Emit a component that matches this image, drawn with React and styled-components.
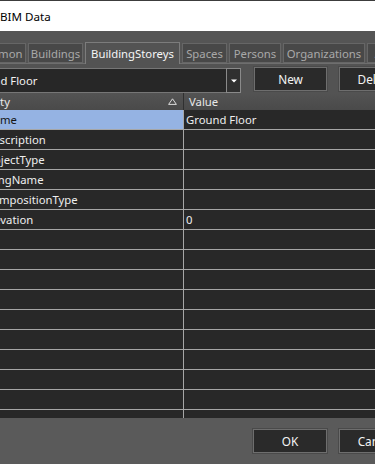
import React from 'react';
import styled, { createGlobalStyle } from 'styled-components';

const Global = createGlobalStyle`
  html, body {
    margin: 0;
    padding: 0;
    width: 375px;
    height: 464px;
    overflow: hidden;
    background: #595959;
  }
  body {
    font-family: "Noto Sans", "Open Sans", sans-serif;
    font-size: 11.3px;
  }
  #root {
    width: 375px;
    height: 464px;
    overflow: hidden;
  }
  * { box-sizing: border-box; }
`;

const Window = styled.div`
  width: 375px;
  height: 464px;
  overflow: hidden;
  display: flex;
  flex-direction: column;
`;

const TitleBar = styled.div`
  flex: none;
  height: 31px;
  border-top: 1px solid #3c3c3c;
  background: #ffffff;
  display: flex;
  align-items: center;
  padding-top: 1px;
  color: #000;
  font-size: 11.6px;
  white-space: nowrap;
`;

const Form = styled.div`
  flex: 1;
  width: 465px;
  margin-left: -40px;
  display: flex;
  flex-direction: column;
  background: #555555;
`;

const TabStrip = styled.div`
  flex: none;
  height: 21px;
  margin-top: 11px;
  padding-left: 10px;
  display: flex;
  align-items: flex-end;
  gap: 2px;
`;

const Tab = styled.div`
  flex: none;
  width: ${p => p.$w}px;
  height: ${p => (p.$active ? 22 : 20)}px;
  margin-bottom: ${p => (p.$active ? -1 : 0)}px;
  position: relative;
  z-index: ${p => (p.$active ? 1 : 0)};
  display: flex;
  align-items: center;
  justify-content: center;
  white-space: nowrap;
  background: ${p => (p.$active ? '#535353' : '#484848')};
  border: 1px solid ${p => (p.$active ? '#7c7c7c' : '#666666')};
  border-bottom: ${p => (p.$active ? 'none' : '1px solid #666666')};
  color: ${p => (p.$active ? '#f6f6f6' : '#a8a8a8')};
`;

const Page = styled.div`
  flex: none;
  background: #535353;
  border-top: 1px solid #6e6e6e;
  padding: 4px 4px 0;
  display: flex;
  flex-direction: column;
`;

const ComboRow = styled.div`
  display: flex;
  align-items: flex-start;
  gap: 12px;
  padding-right: 9px;
  height: 25px;
`;

const Combo = styled.div`
  flex: 1;
  height: 25px;
  margin-right: 1px;
  display: flex;
  background: #272727;
  border: 1px solid #767676;
  color: #f2f2f2;
`;

const ComboText = styled.div`
  flex: 1;
  display: flex;
  align-items: center;
  padding-left: 2px;
  white-space: nowrap;
`;

const DropButton = styled.div`
  flex: none;
  width: 15px;
  margin: -1px -1px -1px 0;
  border: 1px solid #8a8a8a;
  background: #303030;
  display: flex;
  align-items: center;
  justify-content: center;
`;

const Button = styled.div`
  flex: none;
  width: ${p => p.$w || 73}px;
  height: 24px;
  margin-top: ${p => p.$mt || 0}px;
  display: flex;
  align-items: center;
  justify-content: center;
  background: #2a2a2a;
  border: 1px solid #6e6e6e;
  box-shadow: 0 0 0 1px #4a4a4a;
  color: #f4f4f4;
  font-size: 11.8px;
  white-space: nowrap;
`;

const Grid = styled.div`
  height: 325px;
  overflow: hidden;
  background: #282828;
  display: grid;
  grid-template-columns: 220px 1fr;
  grid-auto-rows: 20px;
  grid-template-rows: 17px;
`;

const HeadCell = styled.div`
  display: flex;
  align-items: center;
  justify-content: space-between;
  background: linear-gradient(#535353, #4a4a4a);
  color: #e8e8e8;
  padding-left: ${p => p.$pl}px;
  padding-right: 6px;
  border-right: ${p => (p.$sep ? '1px solid #303030' : 'none')};
  white-space: nowrap;
`;

const Cell = styled.div`
  display: flex;
  align-items: center;
  padding-left: ${p => p.$pl}px;
  padding-bottom: 1px;
  border-bottom: 1px solid #a6a6a6;
  border-right: ${p => (p.$sep ? '1px solid #a6a6a6' : 'none')};
  background: ${p => (p.$selected ? '#95b3e3' : '#282828')};
  color: ${p => (p.$selected ? '#141414' : '#eeeeee')};
  white-space: nowrap;
  overflow: hidden;
`;

const BottomBar = styled.div`
  flex: 1;
  background: #5a5a5a;
  display: flex;
  justify-content: flex-end;
  align-items: flex-start;
  gap: 12px;
  padding: 11px 12px 0 0;
`;

const tabs = [
  { label: 'Common', w: 56 },
  { label: 'Buildings', w: 55 },
  { label: 'BuildingStoreys', w: 95, active: true },
  { label: 'Spaces', w: 45 },
  { label: 'Persons', w: 52 },
  { label: 'Organizations', w: 82 },
  { label: 'Addresses', w: 70 },
];

const rows = [
  { name: 'Name', value: 'Ground Floor', selected: true },
  { name: 'Description', value: '' },
  { name: 'ObjectType', value: '' },
  { name: 'LongName', value: '' },
  { name: 'CompositionType', value: '' },
  { name: 'Elevation', value: '0' },
  ...Array.from({ length: 11 }, () => ({ name: '', value: '' })),
];

const SortGlyph = () => (
  <svg width="9" height="7" viewBox="0 0 9 7">
    <path d="M4.5 0.8 L8.4 6.4 L0.6 6.4 Z" fill="none" stroke="#dcdcdc" strokeWidth="1" />
  </svg>
);

const DropArrow = () => (
  <svg width="6" height="4" viewBox="0 0 6 4">
    <path d="M0 0.5 H6 L3 3.5 Z" fill="#ffffff" />
  </svg>
);

export default function App() {
  return (
    <>
      <Global />
      <Window>
        <TitleBar>BIM Data</TitleBar>
        <Form>
          <TabStrip>
            {tabs.map(t => (
              <Tab key={t.label} $w={t.w} $active={t.active}>
                {t.label}
              </Tab>
            ))}
          </TabStrip>
          <Page>
            <ComboRow>
              <Combo>
                <ComboText>Ground Floor</ComboText>
                <DropButton>
                  <DropArrow />
                </DropButton>
              </Combo>
              <Button $mt={-1}>New</Button>
              <Button $mt={-1}>Delete</Button>
            </ComboRow>
            <Grid>
              <HeadCell $pl={0} $sep>
                <span>Property</span>
                <SortGlyph />
              </HeadCell>
              <HeadCell $pl={5}>
                <span>Value</span>
              </HeadCell>
              {rows.map((r, i) => (
                <React.Fragment key={i}>
                  <Cell $pl={21} $sep $selected={r.selected}>
                    {r.name}
                  </Cell>
                  <Cell $pl={2}>{r.value}</Cell>
                </React.Fragment>
              ))}
            </Grid>
          </Page>
          <BottomBar>
            <Button $w={74}>OK</Button>
            <Button $w={74}>Cancel</Button>
          </BottomBar>
        </Form>
      </Window>
    </>
  );
}
